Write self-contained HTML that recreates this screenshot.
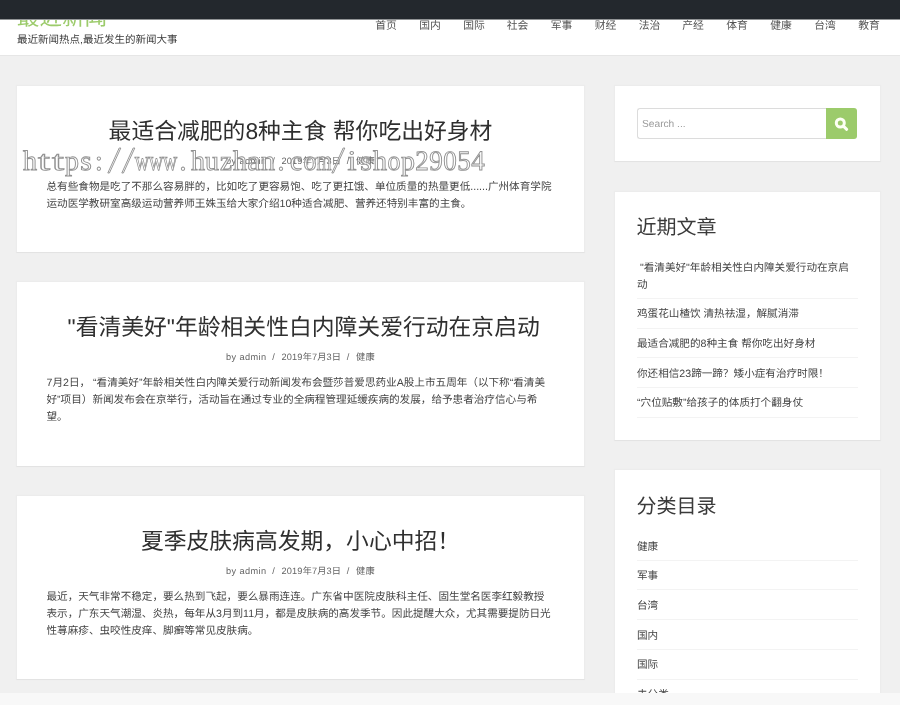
<!DOCTYPE html>
<html lang="zh-CN">
<head>
<meta charset="utf-8">
<title>最近新闻</title>
<style>
*{box-sizing:border-box;margin:0;padding:0}
html,body{width:900px;height:705px;overflow:hidden}
body{position:relative;text-rendering:geometricPrecision;font-weight:350;background:#f0f0f0;font-family:"Liberation Sans",sans-serif;color:#444;font-size:10.5px;line-height:16.85px}
.abs{position:absolute}
.j{display:inline-block;white-space:nowrap;text-align:justify;text-align-last:justify}
.j.b{display:block}
#root{position:absolute;left:0;top:0;width:900px;height:705px;overflow:hidden;will-change:transform}
#hdr{left:0;top:0;width:900px;height:56px;background:#fff;border-bottom:1px solid #e6e6e6}
#topbar{left:0;top:0;width:900px;height:20px;background:#23282d;border-bottom:1px solid #919496;z-index:20}
#botbar{left:0;top:692.6px;width:900px;height:13px;background:#f8f8f8;z-index:20}
#site-title{left:16.8px;top:3px;font-size:22.6px;line-height:30px;color:#9ccb6b;white-space:nowrap}
#site-desc{left:17px;top:32px;font-size:10.5px;line-height:17px;color:#3a3a3a;white-space:nowrap}
#nav{left:0;top:18px;width:900px;height:17px}
#nav>span{position:absolute;top:0;width:44px;text-align:center;font-size:10.8px;line-height:17px;color:#555;white-space:nowrap}
.card{left:16px;width:569px;background:#fff;border:1px solid #ececec;border-bottom-color:#e3e3e3;box-shadow:0 0 1px rgba(0,0,0,.04)}
.card h2{position:absolute;left:0;right:0;top:26.5px;text-align:center;font-weight:300;font-size:22.8px;line-height:36px;color:#2f2f2f;white-space:nowrap}
.card .meta{position:absolute;left:0;right:0;top:67px;text-align:center;font-size:9.2px;line-height:16px;color:#636363;white-space:nowrap;letter-spacing:.3px}
.card .meta b{font-weight:400;letter-spacing:.4px}
.card .meta i{font-style:normal;margin:0 6.5px 0 5.5px}
.card p{position:absolute;left:29.5px;top:93px;white-space:nowrap;color:#444;font-weight:350;font-size:10.6px;line-height:16.85px}
.wid{left:614px;width:267px;background:#fff;border:1px solid #ececec;border-bottom-color:#e3e3e3;box-shadow:0 0 1px rgba(0,0,0,.04)}
.wid h3{position:absolute;left:21.5px;top:18px;font-weight:300;font-size:20.05px;line-height:36px;color:#3a3a3a;white-space:nowrap}
.wid ul{position:absolute;left:22px;top:60.3px;width:221px;list-style:none}
.wid li{padding:7.6px 0 4.25px;border-bottom:1px solid #f3f3f3;font-size:10.6px;line-height:16.85px;color:#444;white-space:nowrap}
#sinput{left:637px;top:108px;width:190px;height:30.5px;border:1px solid #dcdcdc;border-right:0;border-radius:3px 0 0 3px;background:#fff;font-size:10.2px;line-height:32.5px;color:#9a9a9a;padding-left:4px}
#sbtn{left:826px;top:108px;width:31px;height:30.5px;background:#9ccb6b;border-radius:0 3px 3px 0}
#wm{left:0;top:140px;z-index:10}
</style>
</head>
<body>
<div id="root">
<div id="hdr" class="abs">
  <div id="site-title" class="abs"><span class="j" style="width:90.4px">最近新闻</span></div>
  <div id="site-desc" class="abs"><span class="j" style="width:160.4px">最近新闻热点,最近发生的新闻大事</span></div>
  <div id="nav" class="abs">
    <span style="left:364px"><span class="j" style="width:21.6px">首页</span></span><span style="left:408px"><span class="j" style="width:21.6px">国内</span></span><span style="left:452px"><span class="j" style="width:21.6px">国际</span></span><span style="left:495.5px"><span class="j" style="width:21.6px">社会</span></span><span style="left:539.5px"><span class="j" style="width:21.6px">军事</span></span><span style="left:583.5px"><span class="j" style="width:21.6px">财经</span></span><span style="left:627.5px"><span class="j" style="width:21.6px">法治</span></span><span style="left:671px"><span class="j" style="width:21.6px">产经</span></span><span style="left:715px"><span class="j" style="width:21.6px">体育</span></span><span style="left:759px"><span class="j" style="width:21.6px">健康</span></span><span style="left:803px"><span class="j" style="width:21.6px">台湾</span></span><span style="left:847px"><span class="j" style="width:21.6px">教育</span></span>
  </div>
</div>
<div id="topbar" class="abs"></div>

<div class="card abs" style="top:85px;height:167.7px">
  <h2><span class="j" style="width:383.8px">最适合减肥的8种主食 帮你吃出好身材</span></h2>
  <div class="meta"><b>by admin</b><i style="margin-left:5.8px">/</i><span class="j" style="width:59.6px;letter-spacing:.15px">2019年7月3日</span><i>/</i><span class="j" style="width:19.0px">健康</span></div>
  <p><span class="j b" style="width:505.0px">总有些食物是吃了不那么容易胖的，比如吃了更容易饱、吃了更扛饿、单位质量的热量更低......广州体育学院</span><span class="j b" style="width:424.9px">运动医学教研室高级运动营养师王姝玉给大家介绍10种适合减肥、营养还特别丰富的主食。</span></p>
</div>

<div class="card abs" style="top:281.3px;height:185.5px">
  <h2><span class="j" style="width:478.5px">&nbsp;"看清美好"年龄相关性白内障关爱行动在京启动</span></h2>
  <div class="meta"><b>by admin</b><i style="margin-left:5.8px">/</i><span class="j" style="width:59.6px;letter-spacing:.15px">2019年7月3日</span><i>/</i><span class="j" style="width:19.0px">健康</span></div>
  <p><span class="j b" style="width:498.5px">7月2日， “看清美好”年龄相关性白内障关爱行动新闻发布会暨莎普爱思药业A股上市五周年（以下称“看清美</span><span class="j b" style="width:490.8px">好”项目）新闻发布会在京举行，活动旨在通过专业的全病程管理延缓疾病的发展，给予患者治疗信心与希</span><span class="j b" style="width:21.2px">望。</span></p>
</div>

<div class="card abs" style="top:494.8px;height:185.1px">
  <h2 style="top:27px"><span class="j" style="width:319.2px">夏季皮肤病高发期，小心中招！</span></h2>
  <div class="meta"><b>by admin</b><i style="margin-left:5.8px">/</i><span class="j" style="width:59.6px;letter-spacing:.15px">2019年7月3日</span><i>/</i><span class="j" style="width:19.0px">健康</span></div>
  <p style="top:93.5px"><span class="j b" style="width:497.9px">最近，天气非常不稳定，要么热到飞起，要么暴雨连连。广东省中医院皮肤科主任、固生堂名医李红毅教授</span><span class="j b" style="width:504.2px">表示，广东天气潮湿、炎热，每年从3月到11月，都是皮肤病的高发季节。因此提醒大众，尤其需要提防日光</span><span class="j b" style="width:211.9px">性荨麻疹、虫咬性皮痒、脚癣等常见皮肤病。</span></p>
</div>

<div class="wid abs" style="top:85px;height:76.8px"></div>
<div id="sinput" class="abs">Search ...</div>
<div id="sbtn" class="abs">
  <svg width="31" height="31" viewBox="0 0 31 31" style="position:absolute;left:0;top:0"><circle cx="14.3" cy="15" r="4" fill="none" stroke="#fdfff4" stroke-width="3"/><path d="M17.4 18.1 L20.7 21.3" stroke="#fdfff4" stroke-width="3" stroke-linecap="round"/></svg>
</div>

<div class="wid abs" style="top:191px;height:249.8px">
  <h3><span class="j" style="width:80.1px">近期文章</span></h3>
  <ul>
    <li><span class="j b" style="width:211.8px">&nbsp;"看清美好"年龄相关性白内障关爱行动在京启</span><span class="j b" style="width:10.6px">动</span></li>
    <li><span class="j b" style="width:161.9px">鸡蛋花山楂饮 清热祛湿，解腻消滞</span></li>
    <li><span class="j b" style="width:178.3px">最适合减肥的8种主食 帮你吃出好身材</span></li>
    <li><span class="j b" style="width:191.9px">你还相信23蹄一蹄？矮小症有治疗时限！</span></li>
    <li><span class="j b" style="width:166.0px">“穴位贴敷”给孩子的体质打个翻身仗</span></li>
  </ul>
</div>

<div class="wid abs" style="top:468.7px;height:260px">
  <h3 style="top:19px"><span class="j" style="width:80.1px">分类目录</span></h3>
  <ul style="top:61.4px">
    <li><span class="j b" style="width:21.2px">健康</span></li>
    <li><span class="j b" style="width:21.2px">军事</span></li>
    <li><span class="j b" style="width:21.2px">台湾</span></li>
    <li><span class="j b" style="width:21.2px">国内</span></li>
    <li><span class="j b" style="width:21.2px">国际</span></li>
    <li><span class="j b" style="width:31.8px">未分类</span></li>
  </ul>
</div>

<svg id="wm" class="abs" width="900" height="40" viewBox="0 0 900 40" font-family="Liberation Serif, serif" font-size="28" text-anchor="middle" fill="#fff" fill-opacity="0.65" stroke="#929292" stroke-width="0.95">
<text x="30.0" y="30" textLength="14" lengthAdjust="spacingAndGlyphs">h</text>
<text x="44.0" y="30" textLength="12" lengthAdjust="spacingAndGlyphs">t</text>
<text x="58.0" y="30" textLength="12" lengthAdjust="spacingAndGlyphs">t</text>
<text x="72.0" y="30" textLength="14" lengthAdjust="spacingAndGlyphs">p</text>
<text x="86.0" y="30" textLength="11.5" lengthAdjust="spacingAndGlyphs">s</text>
<text x="99.0" y="30">:</text>
<path d="M107.8 33 L119.2 8 L120.8 8 L109.4 33 Z"/>
<path d="M121.8 33 L133.2 8 L134.8 8 L123.4 33 Z"/>
<text x="142.0" y="30" textLength="14.5" lengthAdjust="spacingAndGlyphs">w</text>
<text x="156.0" y="30" textLength="14.5" lengthAdjust="spacingAndGlyphs">w</text>
<text x="170.0" y="30" textLength="14.5" lengthAdjust="spacingAndGlyphs">w</text>
<text x="183.0" y="30">.</text>
<text x="198.0" y="30" textLength="14" lengthAdjust="spacingAndGlyphs">h</text>
<text x="212.0" y="30" textLength="14" lengthAdjust="spacingAndGlyphs">u</text>
<text x="226.0" y="30" textLength="12" lengthAdjust="spacingAndGlyphs">z</text>
<text x="240.0" y="30" textLength="14" lengthAdjust="spacingAndGlyphs">h</text>
<text x="254.0" y="30" textLength="13" lengthAdjust="spacingAndGlyphs">a</text>
<text x="268.0" y="30" textLength="14" lengthAdjust="spacingAndGlyphs">n</text>
<text x="281.0" y="30">.</text>
<text x="296.0" y="30" textLength="12" lengthAdjust="spacingAndGlyphs">c</text>
<text x="310.0" y="30" textLength="13" lengthAdjust="spacingAndGlyphs">o</text>
<text x="324.0" y="30" textLength="15" lengthAdjust="spacingAndGlyphs">m</text>
<path d="M331.8 33 L343.2 8 L344.8 8 L333.4 33 Z"/>
<text x="352.0" y="30" textLength="9" lengthAdjust="spacingAndGlyphs">i</text>
<text x="366.0" y="30" textLength="11.5" lengthAdjust="spacingAndGlyphs">s</text>
<text x="380.0" y="30" textLength="14" lengthAdjust="spacingAndGlyphs">h</text>
<text x="394.0" y="30" textLength="13" lengthAdjust="spacingAndGlyphs">o</text>
<text x="408.0" y="30" textLength="14" lengthAdjust="spacingAndGlyphs">p</text>
<text x="422.0" y="30" textLength="13.5" lengthAdjust="spacingAndGlyphs">2</text>
<text x="436.0" y="30" textLength="13.5" lengthAdjust="spacingAndGlyphs">9</text>
<text x="450.0" y="30" textLength="13.5" lengthAdjust="spacingAndGlyphs">0</text>
<text x="464.0" y="30" textLength="13.5" lengthAdjust="spacingAndGlyphs">5</text>
<text x="478.0" y="30" textLength="13.5" lengthAdjust="spacingAndGlyphs">4</text>
</svg>

<div id="botbar" class="abs"></div>
</div>
</body>
</html>
